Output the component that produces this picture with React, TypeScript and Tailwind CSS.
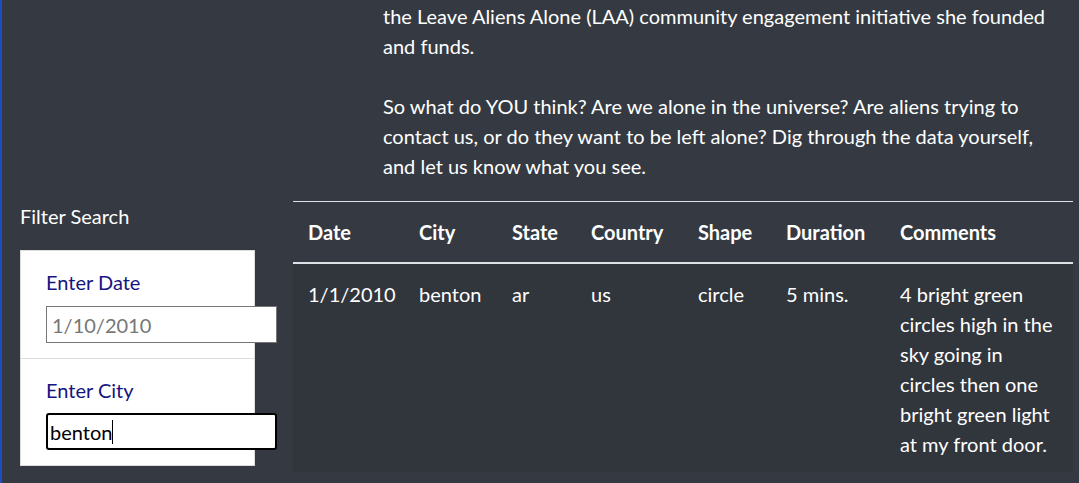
import React from "react";

const rows = [
  {
    date: "1/1/2010",
    city: "benton",
    state: "ar",
    country: "us",
    shape: "circle",
    duration: "5 mins.",
    comments: [
      "4 bright green",
      "circles high in the",
      "sky going in",
      "circles then one",
      "bright green light",
      "at my front door.",
    ],
  },
];

const columns = [
  { label: "Date", w: "w-[111px]" },
  { label: "City", w: "w-[93px]" },
  { label: "State", w: "w-[79px]" },
  { label: "Country", w: "w-[107px]" },
  { label: "Shape", w: "w-[88px]" },
  { label: "Duration", w: "w-[114px]" },
  { label: "Comments", w: "w-[188px]" },
];

function FilterCard() {
  return (
    <div className="mt-[19px] w-[235px] border border-[#dcdcdc] bg-white">
      <div className="border-b border-[#dcdcdc] pb-[15px] pl-[25px] pt-[16px]">
        <label className="block text-[#15157f]">Enter Date</label>
        <input
          readOnly
          placeholder="1/10/2010"
          className="mt-[9px] h-[37px] w-[231px] border border-[#767676] bg-white px-[5px] text-[20px] text-black placeholder:text-[#767676] focus:outline-none"
        />
      </div>
      <div className="pb-[15px] pl-[25px] pt-[16px]">
        <label className="block text-[#15157f]">Enter City</label>
        <div className="mt-[8px] flex h-[37px] w-[231px] items-center rounded-[3px] border-2 border-black bg-white px-[2px] text-black">
          <span>benton</span>
          <span className="h-[24px] w-px bg-black" />
        </div>
      </div>
    </div>
  );
}

export default function App() {
  return (
    <div className="min-h-screen border-l-2 border-[#1d4fc4] bg-[#353a42] font-['Segoe_UI','Lato',sans-serif] text-[20px] leading-[30px] text-white">
      <div className="whitespace-nowrap pl-[381px] pt-px">
        <p>
          the Leave Aliens Alone (LAA) community engagement initiative she founded
          <br />
          and funds.
        </p>
        <p className="mt-[30px]">
          So what do YOU think? Are we alone in the universe? Are aliens trying to
          <br />
          contact us, or do they want to be left alone? Dig through the data yourself,
          <br />
          and let us know what you see.
        </p>
      </div>

      <div className="mt-[20px] flex">
        <aside className="w-[291px] shrink-0 pl-[18px]">
          <h2>Filter Search</h2>
          <FilterCard />
        </aside>

        <table className="w-[780px] table-fixed border-collapse">
          <thead>
            <tr className="border-t border-[#dee2e6]">
              {columns.map((c) => (
                <th
                  key={c.label}
                  className={`${c.w} border-b-2 border-[#dee2e6] p-[15px] text-left font-bold`}
                >
                  {c.label}
                </th>
              ))}
            </tr>
          </thead>
          <tbody className="bg-[#31353c]">
            {rows.map((r) => (
              <tr key={r.date + r.city}>
                <td className="p-[15px] align-top">{r.date}</td>
                <td className="p-[15px] align-top">{r.city}</td>
                <td className="p-[15px] align-top">{r.state}</td>
                <td className="p-[15px] align-top">{r.country}</td>
                <td className="p-[15px] align-top">{r.shape}</td>
                <td className="p-[15px] align-top">{r.duration}</td>
                <td className="whitespace-nowrap p-[15px] pb-[13px] align-top">
                  {r.comments.map((line, i) => (
                    <React.Fragment key={line}>
                      {i > 0 && <br />}
                      {line}
                    </React.Fragment>
                  ))}
                </td>
              </tr>
            ))}
          </tbody>
        </table>
      </div>
    </div>
  );
}
